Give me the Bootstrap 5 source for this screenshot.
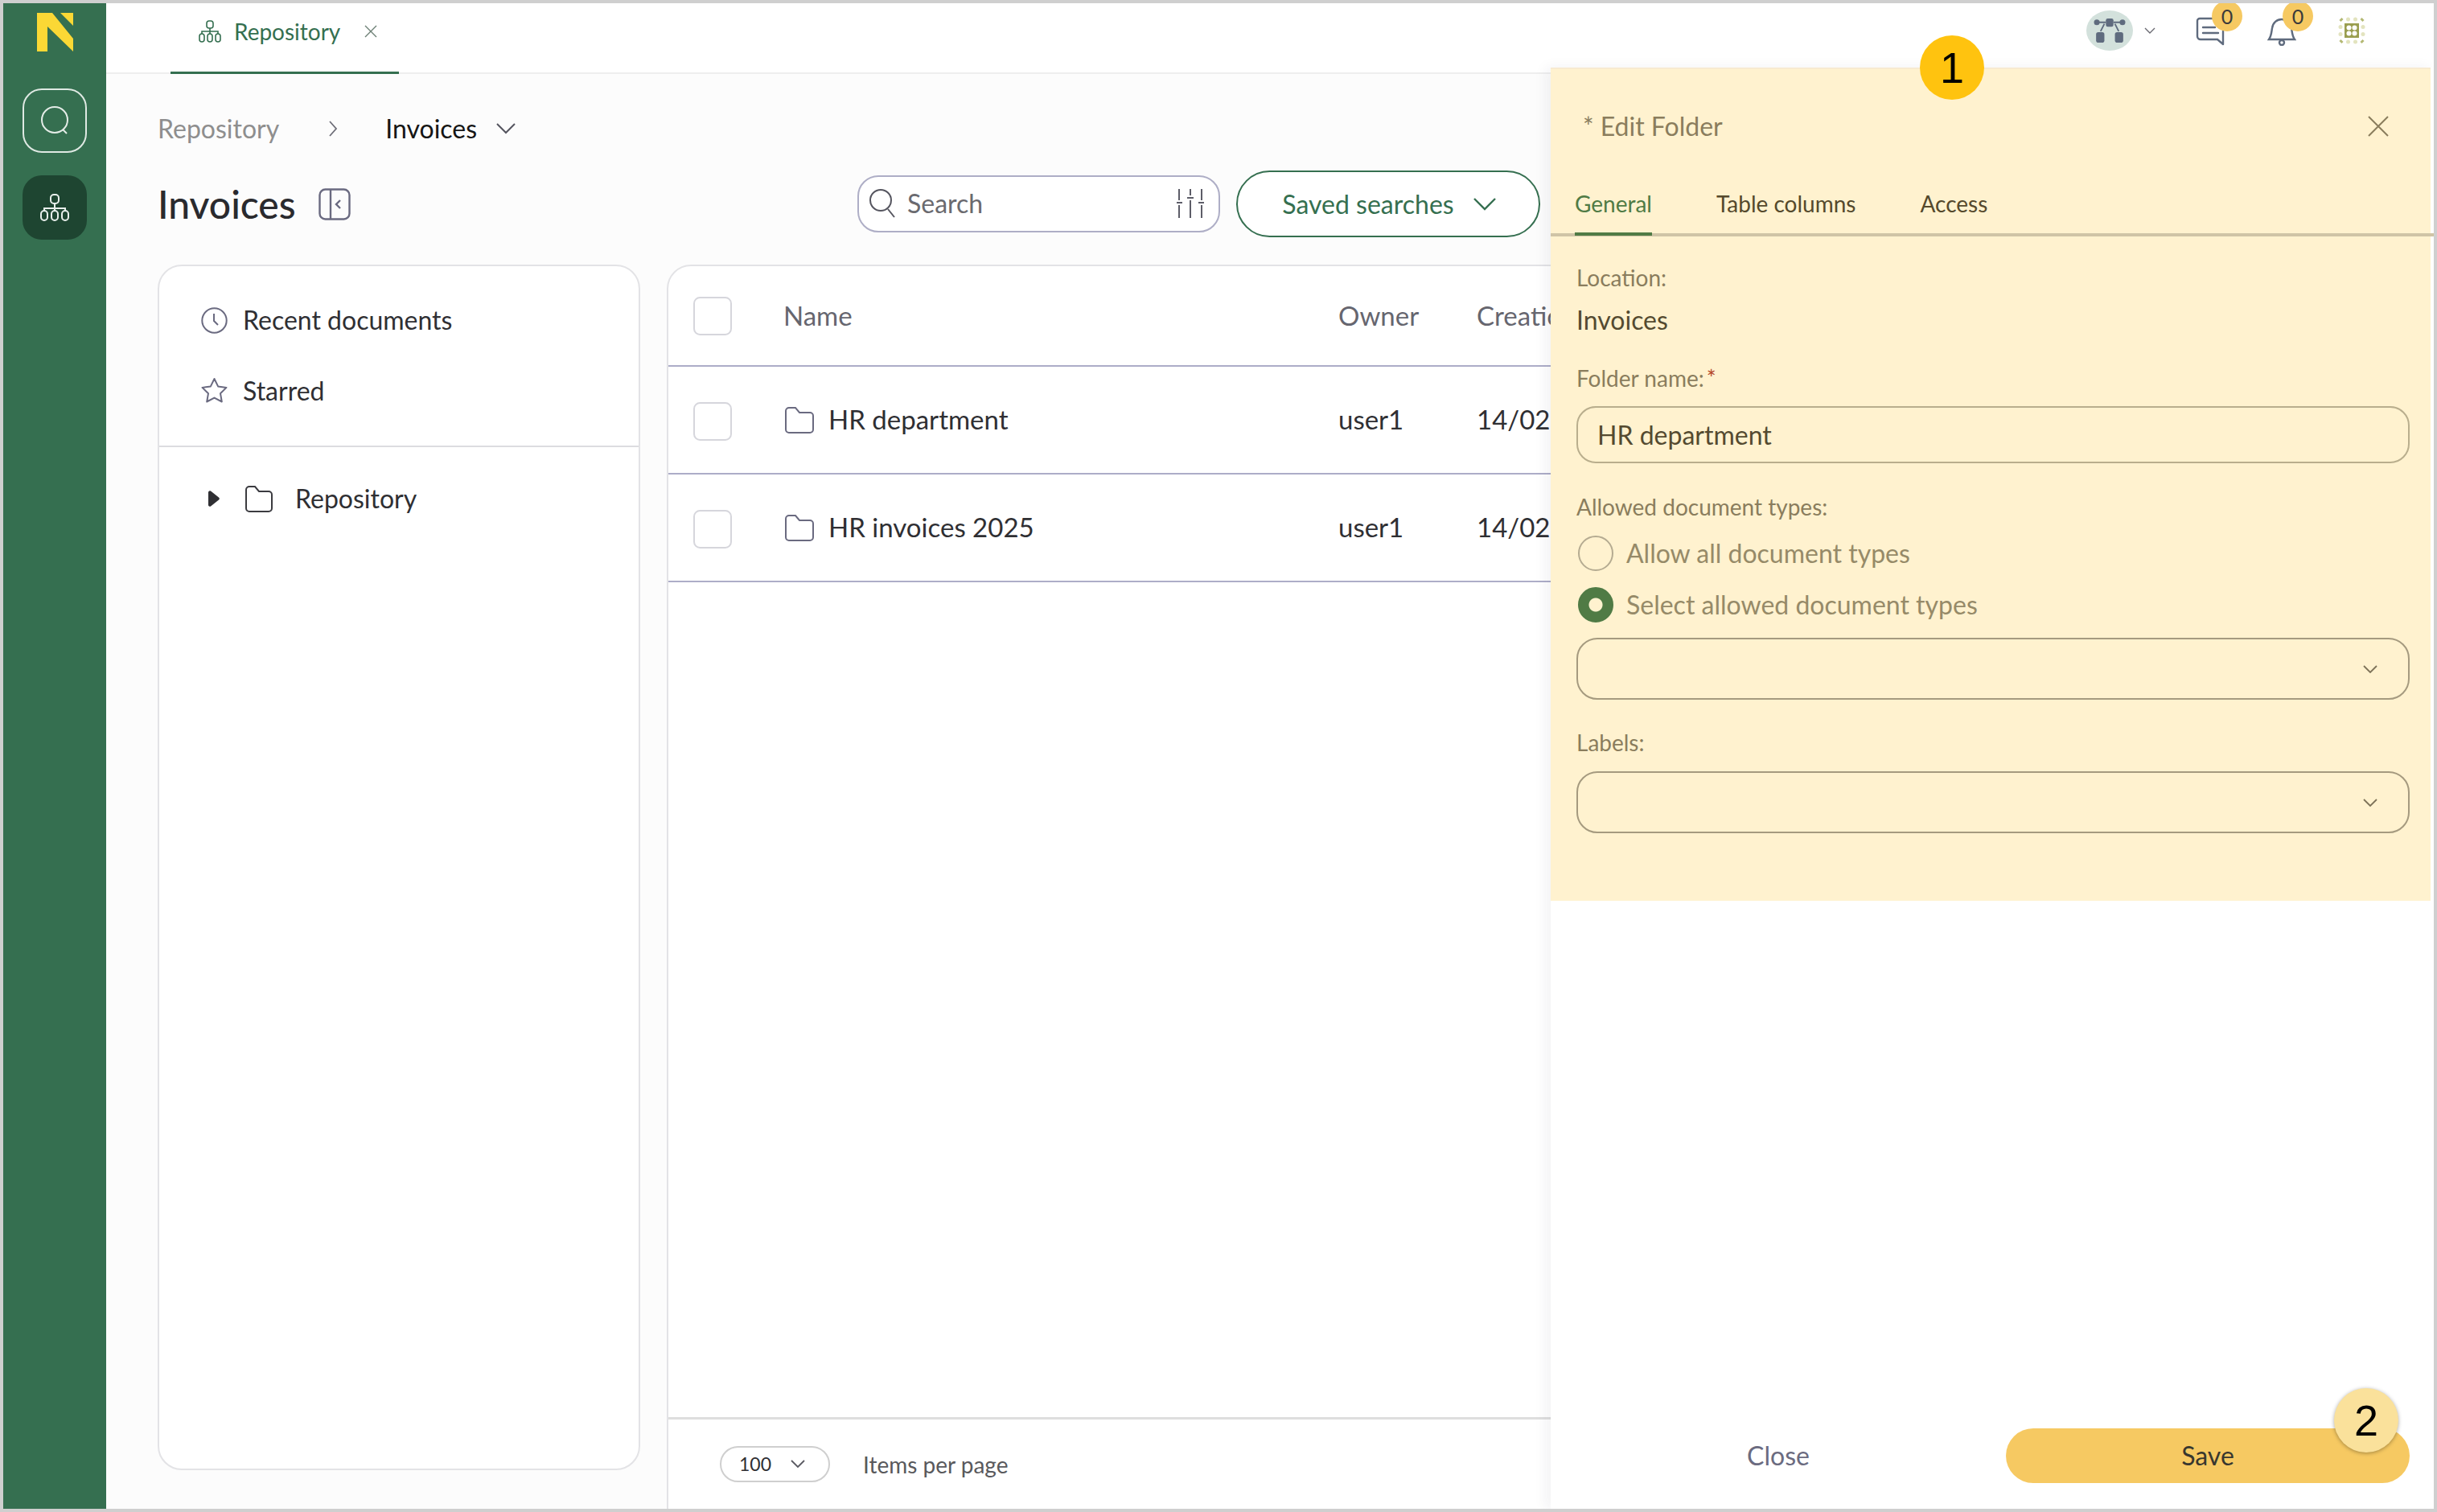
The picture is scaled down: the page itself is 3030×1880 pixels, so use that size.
<!DOCTYPE html>
<html lang="en">
<head>
<meta charset="utf-8">
<title>Edit Folder</title>
<link href="https://cdn.jsdelivr.net/npm/bootstrap@5.3.0/dist/css/bootstrap.min.css" rel="stylesheet">
<style>
html,body{margin:0;background:#cfcfcf;}
body{font-family:"Lato","Liberation Sans",sans-serif;color:#2f2f33;width:3030px;height:1880px;overflow:hidden;}
.app-frame{position:relative;width:3030px;height:1880px;border:4px solid #cfcfcf;background:#fcfcfc;overflow:hidden;}
.side-rail{width:128px;background:#356f50;padding-top:12px;}
.rail-logo{width:45px;height:48px;display:block;margin-left:42px;}
.rail-btn{width:80px;height:80px;border-radius:24px;margin-left:24px;display:flex;align-items:center;justify-content:center;}
.rail-btn-search{border:2px solid #dfe9e3;margin-top:46px;}
.rail-btn-active{background:#1e4531;margin-top:28px;}
.work-col{width:2894px;}
.tab-strip{height:88px;background:#fff;border-bottom:2px solid #eeeeee;padding-left:80px;}
.tab-one{width:284px;height:88px;border-bottom:3px solid #356f50;color:#356f50;font-size:28px;padding-left:35px;padding-bottom:16px;}
.tab-icon{margin-right:16px;}
.tab-close{margin-left:30px;}
.crumbs{height:60px;margin-top:38px;font-size:32px;padding-left:64px;}
.crumb-prev{color:#8e8e8e;}
.crumb-now{color:#151515;}
.crumb-sep{margin:0 59px 0 61px;}
.crumb-drop{margin-left:24px;}
.title-row{height:83px;margin-top:22px;margin-left:64px;width:1719px;}
.page-title{font-size:48px;font-weight:500;margin:0;color:#2a2a2e;line-height:1;}
.title-icon{margin-left:28px;}
.search-box{width:451px;height:71px;border:2px solid #aeaec6;border-radius:26px;background:#fff;padding:0 18px 2px 12px;font-size:32px;color:#6a6a6f;}
.search-word{margin-left:14px;}
.saved-btn{width:378px;height:83px;border:2px solid #356f50;border-radius:42px;color:#356f50;font-size:32px;background:#fff;margin-left:20px;padding:0 0 0 2px;}
.saved-btn:hover{color:#356f50;border-color:#356f50;background:#fff;}
.cols-row{margin-top:34px;margin-left:64px;gap:33px;}
.tree-card{width:600px;height:1499px;border:2px solid #e3e3e6;border-radius:30px;background:#fff;}
.tree-quick{height:225px;border-bottom:2px solid #dcdce0;padding:23px 0 0 52px;font-size:32px;}
.tree-line{height:88px;gap:19px;}
.tree-repo{padding:18px 0 0 60px;font-size:32px;height:110px;}
.tree-folder{margin-left:32px;}
.tree-name{margin-left:28px;}
.data-card{width:2200px;height:1600px;border:2px solid #e3e3e6;border-radius:30px 30px 0 0;background:#fff;}
.data-table{width:1200px;margin:0;font-size:33px;table-layout:fixed;}
.data-table>*>tr>*{padding:0;border-bottom:2px solid #adadc8;vertical-align:middle;background:transparent;box-shadow:none;}
.data-table thead th{height:124px;font-weight:400;color:#66666f;}
.data-table tbody td{height:134px;color:#2f2f33;}
.data-table tbody td.cb-cell{padding-top:4px;}
.col-a{width:143px;}.col-b{width:690px;}.col-c{width:172px;}.col-d{width:195px;}
.name-cell{margin-left:2px;gap:18px;}
.cb-box{width:48px;height:48px;margin:0 0 0 31px;border:2px solid #d6d6dc;border-radius:7px;background:#fff;float:none;display:block;}
.table-foot{position:absolute;left:827px;top:1758px;width:1100px;height:114px;background:#fff;border-top:3px solid #dedede;padding-left:64px;}
.per-page{width:137px;height:45px;border:2px solid #cfcfcf;border-radius:23px;font-size:23px;padding-left:22px;color:#2f2f33;}
.per-drop{margin-left:24px;}
.per-label{font-size:28px;color:#59595c;margin-left:41px;}
.edit-panel{position:absolute;left:1924px;top:80px;width:1098px;height:1792px;background:#fff;box-shadow:-6px 0 16px rgba(40,40,60,.06);}
.edit-hi{height:1036px;background:#fff2cf;margin-right:4px;color:#8a7d5d;}
.edit-head{height:148px;padding:0 52px 4px 40px;font-size:32px;border-top:2px solid #f7ead0;}
.edit-tabs{height:62px;margin-right:-4px;border-bottom:4px solid #cfc4a6;padding-left:30px;gap:80px;font-size:28px;}
.edit-tabs .nav-link{padding:0 0 15px;color:#55492c;border-bottom:4px solid transparent;}
.edit-tabs .nav-link.active{color:#507b45;border-bottom-color:#507b45;}
.edit-body{padding:0 26px 0 32px;}
.lbl{font-size:28px;color:#8a7d5d;margin:0;display:block;line-height:32px;}
.req{color:#b5482a;margin-left:3px;}
.val{font-size:32px;color:#544a30;line-height:40px;margin-top:17px;}
.gap-a{margin-top:35px;}.gap-b{margin-top:36px;}.gap-c{margin-top:38px;}.gap-d{margin-top:37px;}
.inp{height:71px;border:2px solid #b9ae8d;border-radius:24px;background:#fff2cf;color:#544a30;font-size:32px;padding:0 24px;margin-top:19px;box-shadow:none;}
.inp:focus{background:#fff2cf;border-color:#b9ae8d;box-shadow:none;color:#544a30;}
.rd-row{height:44px;gap:16px;font-size:32px;color:#968a68;margin:20px 0 0;padding:0 0 0 2px;}
.rd-row .form-check-input{width:44px;height:44px;margin:0;float:none;background-color:#fff2cf;border:2px solid #b5ab91;flex:none;}
.rd-row .form-check-input:checked{background-color:#507b45;border-color:#507b45;background-image:radial-gradient(circle,#fff2cf 0 8px,#507b45 9px);}
.drop{height:77px;border:2px solid #a59a7f;border-radius:26px;padding-right:38px;}
.drop-a{margin-top:19px;}.drop-b{margin-top:20px;}
.edit-foot{position:absolute;left:0;right:0;bottom:0;height:100px;}
.btn-close-txt{position:absolute;left:156px;top:4px;width:254px;height:60px;color:#6b6b80;font-size:32px;padding:0;border:0;background:none;}
.btn-save-y{position:absolute;left:566px;top:0;width:502px;height:68px;border-radius:34px;background:#f6c962;border:0;color:#38372f;font-size:32px;padding:0;}
.btn-save-y:hover{background:#f6c962;color:#38372f;}
.mark-dot{position:absolute;width:80px;height:80px;border-radius:50%;font-family:"Liberation Sans",Arial,sans-serif;font-size:54px;color:#000;display:flex;align-items:center;justify-content:center;}
.mark-one{left:2383px;top:40px;background:#ffc30f;}
.mark-two{left:2898px;top:1722px;background:#fae19b;box-shadow:0 1px 5px rgba(0,0,0,.35);}
.tool-svg{position:absolute;}
.t-chev{left:2662px;top:30px;}.t-chat{left:2726px;top:17px;}.t-bell{left:2815px;top:17px;}.t-grid{left:2903px;top:17px;}
.tool-count{position:absolute;width:38px;height:38px;border-radius:50%;background:#f6c962;color:#3b3b3b;font-size:25px;line-height:38px;text-align:center;top:-3px;}
.c-chat{left:2746px;}.c-bell{left:2834px;}
.avatar-dot{position:absolute;left:2590px;top:9px;width:58px;height:50px;border-radius:50%;background:#d3e1dc;display:flex;align-items:center;justify-content:center;}
svg{display:block;flex:none;}
</style>
</head>
<body>
<div class="app-frame d-flex">
  <aside class="side-rail flex-shrink-0">
    <svg class="rail-logo" viewBox="0 0 45 48"><path fill="#fbd835" d="M0 0H19L45 32V48L13 17V48H0Z"/><path fill="#fbd835" d="M29 0H45V16Z"/></svg>
    <div class="rail-btn rail-btn-search">
      <svg width="36" height="38" viewBox="0 0 36 38" fill="none" stroke="#e4ece7" stroke-width="2"><circle cx="18" cy="18" r="16"/><path d="M28 30l5 5"/></svg>
    </div>
    <div class="rail-btn rail-btn-active">
      <svg width="36" height="34" viewBox="0 0 36 34" fill="none" stroke="#e8efeb" stroke-width="2"><rect x="13" y="1" width="10" height="11" rx="4"/><path d="M18 12v9M5 21v-3h26v3"/><rect x="1" y="21" width="8" height="12" rx="4"/><rect x="14" y="21" width="8" height="12" rx="4"/><rect x="27" y="21" width="8" height="12" rx="4"/></svg>
    </div>
  </aside>
  <main class="work-col flex-shrink-0">
    <div class="tab-strip">
      <div class="tab-one d-flex align-items-center">
        <svg class="tab-icon" width="28" height="28" viewBox="0 0 28 28" fill="none" stroke="#356f50" stroke-width="1.6"><rect x="10" y="1" width="8" height="9" rx="3"/><path d="M14 10v7M4 17v-3h20v3"/><rect x="1" y="17" width="6" height="10" rx="3"/><rect x="11" y="17" width="6" height="10" rx="3"/><rect x="21" y="17" width="6" height="10" rx="3"/></svg>
        <span>Repository</span>
        <svg class="tab-close" width="16" height="16" viewBox="0 0 16 16" stroke="#6c7f74" stroke-width="1.4"><path d="M1 1l14 14M15 1L1 15"/></svg>
      </div>
    </div>
    <nav class="crumbs d-flex align-items-center">
      <span class="crumb-prev">Repository</span>
      <svg class="crumb-sep" width="12" height="22" viewBox="0 0 12 22" fill="none" stroke="#6e6e78" stroke-width="1.8"><path d="M2 2l8 9-8 9"/></svg>
      <span class="crumb-now">Invoices</span>
      <svg class="crumb-drop" width="24" height="14" viewBox="0 0 24 14" fill="none" stroke="#55555f" stroke-width="2"><path d="M1 1l11 11L23 1"/></svg>
    </nav>
    <div class="title-row d-flex align-items-center">
      <h1 class="page-title">Invoices</h1>
      <svg class="title-icon" width="40" height="40" viewBox="0 0 40 40" fill="none" stroke="#6a6a80" stroke-width="2.4"><rect x="1.500" y="1.500" width="37" height="37" rx="7"/><path d="M15 2v36"/><path d="M27 15l-5 5 5 5"/></svg>
      <div class="search-box d-flex align-items-center ms-auto">
        <svg width="34" height="38" viewBox="0 0 34 38" fill="none" stroke="#55555f" stroke-width="2"><circle cx="15" cy="15" r="13"/><path d="M24 26l8 10"/></svg>
        <span class="search-word flex-grow-1">Search</span>
        <svg width="34" height="38" viewBox="0 0 34 38" fill="none" stroke="#5d5d68" stroke-width="2"><path d="M3 1v14M3 21v16M17 1v8M17 15v22M31 1v14M31 21v16M-1 18h8M13 12h8M27 18h8"/></svg>
      </div>
      <button type="button" class="btn saved-btn d-flex align-items-center justify-content-center gap-4">Saved searches
        <svg width="28" height="16" viewBox="0 0 28 16" fill="none" stroke="#356f50" stroke-width="2.4"><path d="M1 1l13 13L27 1"/></svg>
      </button>
    </div>
    <div class="cols-row d-flex">
      <section class="tree-card flex-shrink-0">
        <div class="tree-quick">
          <div class="tree-line d-flex align-items-center">
            <svg width="33" height="33" viewBox="0 0 33 33" fill="none" stroke="#6a6a80" stroke-width="2"><circle cx="16.500" cy="16.500" r="15.200"/><path d="M16 8v9l5 5"/></svg>
            <span>Recent documents</span>
          </div>
          <div class="tree-line d-flex align-items-center">
            <svg width="33" height="34" viewBox="0 0 33 34" fill="none" stroke="#6a6a80" stroke-width="2" stroke-linejoin="round"><path d="M16.500 2l4.600 9.400 10.400 1.500-7.500 7.300 1.800 10.300-9.300-4.900-9.300 4.900 1.800-10.300-7.500-7.300 10.400-1.500z"/></svg>
            <span>Starred</span>
          </div>
        </div>
        <div class="tree-repo d-flex align-items-center">
          <svg width="15" height="22" viewBox="0 0 15 22"><path fill="#2f2f33" d="M1 3a2 2 0 013-1.500l10 8a2 2 0 010 3l-10 8a2 2 0 01-3-1.500z"/></svg>
          <svg class="tree-folder" width="34" height="33" viewBox="0 0 34 33" fill="none" stroke="#3b3b40" stroke-width="2"><path d="M1 5a4 4 0 014-4h7l5 6h12a4 4 0 014 4v17a4 4 0 01-4 4H5a4 4 0 01-4-4z"/></svg>
          <span class="tree-name">Repository</span>
        </div>
      </section>
      <section class="data-card flex-shrink-0">
        <table class="table data-table">
          <colgroup><col class="col-a"><col class="col-b"><col class="col-c"><col class="col-d"></colgroup>
          <thead><tr><th><input class="form-check-input cb-box" type="checkbox" aria-label="Select all"></th><th>Name</th><th>Owner</th><th>Creation</th></tr></thead>
          <tbody>
            <tr><td class="cb-cell"><input class="form-check-input cb-box" type="checkbox" aria-label="Select"></td><td><div class="name-cell d-flex align-items-center"><svg width="36" height="33" viewBox="0 0 36 33" fill="none" stroke="#6a6a80" stroke-width="2"><path d="M1 5a4 4 0 014-4h8l5 6h13a4 4 0 014 4v17a4 4 0 01-4 4H5a4 4 0 01-4-4z"/></svg>HR department</div></td><td>user1</td><td>14/02</td></tr>
            <tr><td class="cb-cell"><input class="form-check-input cb-box" type="checkbox" aria-label="Select"></td><td><div class="name-cell d-flex align-items-center"><svg width="36" height="33" viewBox="0 0 36 33" fill="none" stroke="#6a6a80" stroke-width="2"><path d="M1 5a4 4 0 014-4h8l5 6h13a4 4 0 014 4v17a4 4 0 01-4 4H5a4 4 0 01-4-4z"/></svg>HR invoices 2025</div></td><td>user1</td><td>14/02</td></tr>
          </tbody>
        </table>
      </section>
    </div>
  </main>
  <footer class="table-foot d-flex align-items-center">
    <div class="per-page d-flex align-items-center">100
      <svg class="per-drop" width="18" height="11" viewBox="0 0 18 11" fill="none" stroke="#5a5a62" stroke-width="1.8"><path d="M1 1l8 8 8-8"/></svg>
    </div>
    <span class="per-label">Items per page</span>
  </footer>

  <!-- top-right tools -->
  <div class="avatar-dot">
    <svg width="40" height="30" viewBox="0 0 42 32" fill="#5f6b7e"><rect x="16" y="0" width="10" height="11" rx="2.500"/><circle cx="4" cy="5" r="3.800"/><circle cx="38" cy="5" r="3.800"/><rect x="3" y="18" width="11" height="14" rx="3"/><rect x="28" y="18" width="11" height="14" rx="3"/><path d="M4 5h12M38 5H26M14 7l-5 10M28 7l5 10" stroke="#5f6b7e" stroke-width="2" fill="none"/></svg>
  </div>
  <svg class="tool-svg t-chev" width="14" height="9" viewBox="0 0 14 9" fill="none" stroke="#6a6a72" stroke-width="1.400"><path d="M1 1l6 6 6-6"/></svg>
  <svg class="tool-svg t-chat" width="36" height="36" viewBox="0 0 36 36" fill="none" stroke="#5f6b7e" stroke-width="2.400" stroke-linecap="round"><path d="M34 34l-7-6H6a4 4 0 01-4-4V5a3 3 0 013-3h20M34 18v16"/><path d="M9 13h15M9 20h19"/></svg>
  <div class="tool-count c-chat">0</div>
  <svg class="tool-svg t-bell" width="36" height="36" viewBox="0 0 36 36" fill="none" stroke="#5f6b7e" stroke-width="2.400"><path d="M2 28c3-4 3-8 4-14 1-7 6-11 12-11s11 4 12 11c1 6 1 10 4 14z"/><circle cx="18" cy="32" r="3"/></svg>
  <div class="tool-count c-bell">0</div>
  <svg class="tool-svg t-grid" width="34" height="34" viewBox="0 0 34 34"><g fill="#e3e4bf"><circle cx="12.500" cy="3" r="2.500"/><circle cx="21.500" cy="3" r="2.500"/><circle cx="12.500" cy="31" r="2.500"/><circle cx="21.500" cy="31" r="2.500"/><circle cx="3" cy="12.500" r="2.500"/><circle cx="3" cy="21.500" r="2.500"/><circle cx="31" cy="12.500" r="2.500"/><circle cx="31" cy="21.500" r="2.500"/></g><path d="M2.500 5l3-3M28.500 2l3 3M2.500 29l3 3M28.500 32l3-3" stroke="#b4b974" stroke-width="3"/><rect x="8" y="8" width="18" height="18" fill="#9a9e50"/><g fill="#fff"><circle cx="13.500" cy="13.500" r="3"/><circle cx="20.500" cy="13.500" r="3"/><circle cx="13.500" cy="20.500" r="3"/><circle cx="20.500" cy="20.500" r="3"/></g></svg>

  <!-- edit folder panel -->
  <aside class="edit-panel d-flex flex-column">
    <div class="edit-hi">
      <div class="edit-head d-flex align-items-center justify-content-between">
        <span>* Edit Folder</span>
        <svg width="26" height="26" viewBox="0 0 26 26" stroke="#8a7d5d" stroke-width="2"><path d="M1 1l24 24M25 1L1 25"/></svg>
      </div>
      <ul class="nav edit-tabs">
        <li class="nav-item"><a class="nav-link active" href="#">General</a></li>
        <li class="nav-item"><a class="nav-link" href="#">Table columns</a></li>
        <li class="nav-item"><a class="nav-link" href="#">Access</a></li>
      </ul>
      <div class="edit-body">
        <label class="lbl gap-a">Location:</label>
        <div class="val">Invoices</div>
        <label class="lbl gap-b">Folder name:<span class="req">*</span></label>
        <input class="form-control inp" value="HR department" aria-label="Folder name">
        <label class="lbl gap-c">Allowed document types:</label>
        <label class="form-check rd-row d-flex align-items-center"><input class="form-check-input" type="radio" name="adt"><span>Allow all document types</span></label>
        <label class="form-check rd-row d-flex align-items-center"><input class="form-check-input" type="radio" name="adt" checked><span>Select allowed document types</span></label>
        <div class="drop drop-a d-flex align-items-center justify-content-end"><svg width="18" height="10" viewBox="0 0 18 10" fill="none" stroke="#7d7258" stroke-width="1.800"><path d="M1 1l8 8 8-8"/></svg></div>
        <label class="lbl gap-d">Labels:</label>
        <div class="drop drop-b d-flex align-items-center justify-content-end"><svg width="18" height="10" viewBox="0 0 18 10" fill="none" stroke="#7d7258" stroke-width="1.800"><path d="M1 1l8 8 8-8"/></svg></div>
      </div>
    </div>
    <div class="edit-foot">
      <button type="button" class="btn btn-close-txt">Close</button>
      <button type="button" class="btn btn-save-y">Save</button>
    </div>
  </aside>

  <div class="mark-dot mark-one">1</div>
  <div class="mark-dot mark-two">2</div>
</div>
<script src="https://cdn.jsdelivr.net/npm/bootstrap@5.3.0/dist/js/bootstrap.bundle.min.js"></script>
</body>
</html>
